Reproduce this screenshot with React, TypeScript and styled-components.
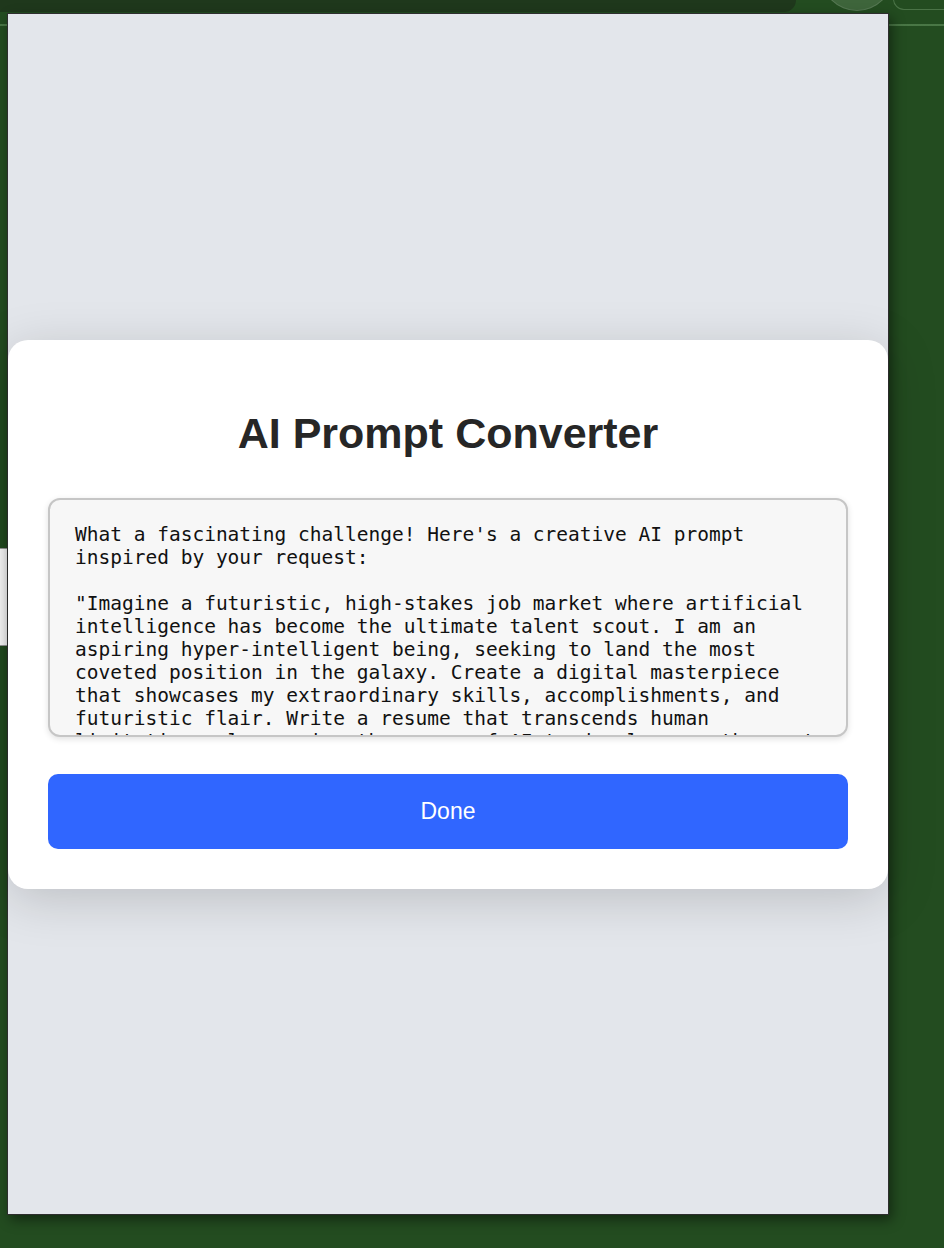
import React from "react";
import styled, { createGlobalStyle } from "styled-components";

const GlobalStyle = createGlobalStyle`
  html, body {
    margin: 0;
    padding: 0;
  }
  body {
    min-height: 1248px;
    font-family: "Liberation Sans", Arial, sans-serif;
    background:
      linear-gradient(
        to bottom,
        transparent 24px,
        rgba(120, 170, 115, 0.45) 24px,
        rgba(120, 170, 115, 0.45) 26px,
        transparent 26px
      ),
      #234c20;
    overflow: hidden;
  }
`;

const Desktop = styled.div`
  display: flex;
  flex-direction: column;
  width: 944px;
  height: 1248px;
`;

const TopStrip = styled.div`
  display: flex;
  align-items: flex-start;
  height: 12px;
  overflow: hidden;
`;

const DarkBar = styled.div`
  width: 796px;
  height: 12px;
  background: #1f381c;
  border-bottom-right-radius: 14px;
`;

const Knob = styled.div`
  flex: none;
  width: 72px;
  height: 72px;
  margin: -61px 0 0 25px;
  border-radius: 50%;
  background: #3e653b;
  box-shadow: inset 0 0 0 1px rgba(255, 255, 255, 0.12);
`;

const Pill = styled.div`
  flex: 1;
  height: 10px;
  margin-top: -1px;
  border: 1px solid rgba(150, 190, 145, 0.35);
  border-top: none;
  border-right: none;
  border-bottom-left-radius: 12px;
`;

const Workspace = styled.div`
  display: flex;
  align-items: flex-start;
`;

const SideTab = styled.div`
  flex: none;
  width: 7px;
  height: 96px;
  margin-top: 536px;
  background: #ffffff;
  border-top: 1px solid #9a9a9a;
  border-bottom: 1px solid #9a9a9a;
`;

const Panel = styled.div`
  flex: none;
  width: 880px;
  height: 1200px;
  margin-top: 1px;
  border: 1px solid #2e2e2e;
  background: #e3e6eb;
  box-shadow: 3px 5px 12px rgba(0, 0, 0, 0.45);
  display: flex;
  align-items: center;
  justify-content: center;
`;

const Card = styled.div`
  width: 100%;
  box-sizing: border-box;
  padding: 40px;
  background: #ffffff;
  border-radius: 20px;
  box-shadow: 0 10px 50px rgba(0, 0, 0, 0.17);
  display: flex;
  flex-direction: column;
`;

const Title = styled.h1`
  margin: 28px 0 40px;
  font-family: "Liberation Sans", Arial, sans-serif;
  font-size: 43px;
  line-height: 50px;
  font-weight: 700;
  color: #262626;
  text-align: center;
`;

const Output = styled.textarea`
  display: block;
  width: 100%;
  height: 239px;
  box-sizing: border-box;
  margin: 0 0 37px;
  padding: 23px 24px 23px 25px;
  border: 2px solid #c6c6c6;
  border-radius: 12px;
  background: #f7f7f7;
  box-shadow: 0 2px 6px rgba(0, 0, 0, 0.12);
  font-family: "DejaVu Sans Mono", monospace;
  font-size: 19.5px;
  line-height: 23px;
  color: #111111;
  resize: none;
  outline: none;
  overflow: hidden;
  scrollbar-width: none;
  &::-webkit-scrollbar {
    display: none;
  }
`;

const DoneButton = styled.button`
  height: 75px;
  width: 100%;
  border: none;
  border-radius: 10px;
  background: #3066ff;
  color: #ffffff;
  font-family: "Liberation Sans", Arial, sans-serif;
  font-size: 23px;
  font-weight: 400;
  cursor: pointer;
`;

const promptText = `What a fascinating challenge! Here's a creative AI prompt inspired by your request:

"Imagine a futuristic, high-stakes job market where artificial intelligence has become the ultimate talent scout. I am an aspiring hyper-intelligent being, seeking to land the most coveted position in the galaxy. Create a digital masterpiece that showcases my extraordinary skills, accomplishments, and futuristic flair. Write a resume that transcends human limitations, leveraging the power of AI to dazzle even the most discerning recruiters of tomorrow."`;

export default function App() {
  return (
    <>
      <GlobalStyle />
      <Desktop>
        <TopStrip>
          <DarkBar />
          <Knob />
          <Pill />
        </TopStrip>
        <Workspace>
          <SideTab />
          <Panel>
            <Card>
              <Title>AI Prompt Converter</Title>
              <Output readOnly value={promptText} />
              <DoneButton type="button">Done</DoneButton>
            </Card>
          </Panel>
        </Workspace>
      </Desktop>
    </>
  );
}
